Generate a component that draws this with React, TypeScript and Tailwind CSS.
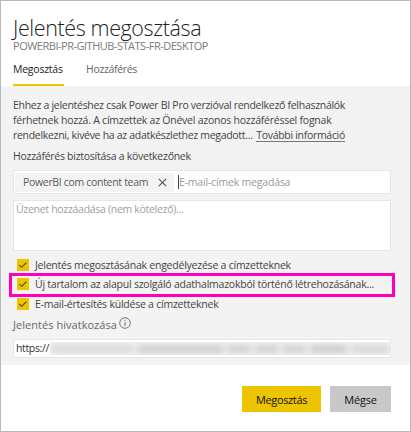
import React from 'react';

function Check() {
  return (
    <span className="flex h-3 w-3 shrink-0 items-center justify-center bg-[#ecc400]">
      <svg width="10" height="8" viewBox="0 0 10 8" fill="none" stroke="#4a4216" strokeWidth="1.1">
        <path d="M1.3 4.1 3.7 6.3 8.4 1.7" />
      </svg>
    </span>
  );
}

function Option({ label }: { label: string }) {
  return (
    <label className="flex h-3 items-center gap-1.5">
      <Check />
      <span className="whitespace-nowrap tracking-[-0.23px]">{label}</span>
    </label>
  );
}

export default function App() {
  return (
    <div className="flex h-[432px] w-[411px] flex-col overflow-hidden border border-[#b9b9b9] bg-white font-['Open_Sans','Noto_Sans',sans-serif] text-[10.5px] leading-[15px] text-[#444]">
      <header className="flex h-[85px] flex-col pl-3">
        <h1 className="mt-[15px] h-[22px] whitespace-nowrap text-[21.5px] font-light leading-6 tracking-[-0.39px] text-[#222]">
          Jelentés megosztása
        </h1>
        <p className="h-[15px] whitespace-nowrap text-[11px] tracking-[-0.49px] text-[#7c7c7c]">POWERBI-PR-GITHUB-STATS-FR-DESKTOP</p>
        <nav className="mt-auto flex h-[25px] gap-[22px] whitespace-nowrap">
          <span className="w-[51px] border-b-2 border-[#ecc400] pt-px tracking-[-0.24px] text-[#222]">Megosztás</span>
          <span className="pt-px tracking-[-0.34px] text-[#666]">Hozzáférés</span>
        </nav>
      </header>

      <main className="h-[279px] bg-[#f3f3f3] pl-3 pr-[19px]">
        <div className="whitespace-nowrap pt-3">
          <p className="tracking-[-0.29px]">Ehhez a jelentéshez csak Power BI Pro verzióval rendelkező felhasználók</p>
          <p className="tracking-[-0.24px]">férhetnek hozzá. A címzettek az Önével azonos hozzáféréssel fognak</p>
          <p className="flex justify-between pr-[46px] tracking-[-0.3px]">
            <span>rendelkezni, kivéve ha az adatkészlethez megadott...</span>
            <a className="h-[14px] border-b border-[#777]">További információ</a>
          </p>
        </div>
        <p className="mt-[6px] h-[15px] whitespace-nowrap tracking-[-0.27px]">Hozzáférés biztosítása a következőnek</p>

        <div className="mt-[6px] flex h-6 items-center border border-[#e6e6e6] bg-white">
          <div className="ml-px flex h-[19px] w-[159px] items-center bg-[#f3f3f3] pl-2 text-[#5a5a5a]">
            <span className="w-[135px] whitespace-nowrap tracking-[-0.32px]">PowerBI com content team</span>
            <svg width="9" height="9" viewBox="0 0 9 9" fill="none" stroke="#555" strokeWidth="1.1">
              <path d="M.8.8l7.4 7.4M8.2.8.8 8.2" />
            </svg>
          </div>
          <span className="ml-1 h-[14px] w-px bg-[#444]" />
          <span className="whitespace-nowrap pt-px tracking-[-0.19px] text-[#999]">E-mail-címek megadása</span>
        </div>

        <div className="mt-[6px] h-[51px] whitespace-nowrap border border-[#e6e6e6] bg-white pl-0.5 pt-px tracking-[-0.3px] text-[#a0a0a0]">
          Üzenet hozzáadása (nem kötelező)...
        </div>

        <div className="mt-2 pl-1">
          <Option label="Jelentés megosztásának engedélyezése a címzetteknek" />
        </div>
        <div className="-ml-1 -mr-1 mt-0.5 flex h-6 items-center border-3 border-[#ff00c0] pb-0.5 pl-[5px]">
          <Option label="Új tartalom az alapul szolgáló adathalmazokból történő létrehozásának..." />
        </div>
        <div className="mt-px pl-1">
          <Option label="E-mail-értesítés küldése a címzetteknek" />
        </div>

        <div className="mt-[7px] flex h-[15px] whitespace-nowrap text-[#666]">
          <span className="w-[106px] text-[11px] tracking-[0.04px]">Jelentés hivatkozása</span>
          <svg width="12" height="12" viewBox="0 0 12 12" fill="none" stroke="#666">
            <circle cx="6" cy="6" r="5.3" strokeWidth=".9" />
            <path d="M6 5v4M6 2.8v1" />
          </svg>
        </div>
        <div className="mt-[7px] flex h-[19px] items-center overflow-hidden whitespace-nowrap border border-[#e6e6e6] bg-white pl-0.5 text-[#333]">
          <span className="w-[34px] shrink-0 tracking-[-0.35px]">https://</span>
          <div className="h-[13px] flex-1 overflow-hidden bg-[#f2f2f2]">
            <div className="flex h-[13px] items-center gap-1 pl-px blur-[3px]">
              <span className="h-2 w-[83px] bg-[#d8d8d8]" />
              <span className="h-2 w-[85px] bg-[#cdcdcd]" />
              <span className="h-2 w-[24px] bg-[#cfcfcf]" />
              <span className="h-2 w-[23px] bg-[#cfcfcf]" />
              <span className="h-2 w-[24px] bg-[#d0d0d0]" />
              <span className="h-2 w-[37px] bg-[#cbcbcb]" />
              <span className="h-2 w-[38px] bg-[#d6d6d6]" />
            </div>
          </div>
        </div>
      </main>

      <footer className="flex justify-end gap-[9px] pr-[19px] pt-[21px] text-[11px] text-[#111]">
        <button className="h-[26px] w-[79px] bg-[#ecc400] tracking-[-0.36px]">Megosztás</button>
        <button className="h-[26px] w-[61px] bg-[#c8c8c8] tracking-[-0.2px]">Mégse</button>
      </footer>
    </div>
  );
}
